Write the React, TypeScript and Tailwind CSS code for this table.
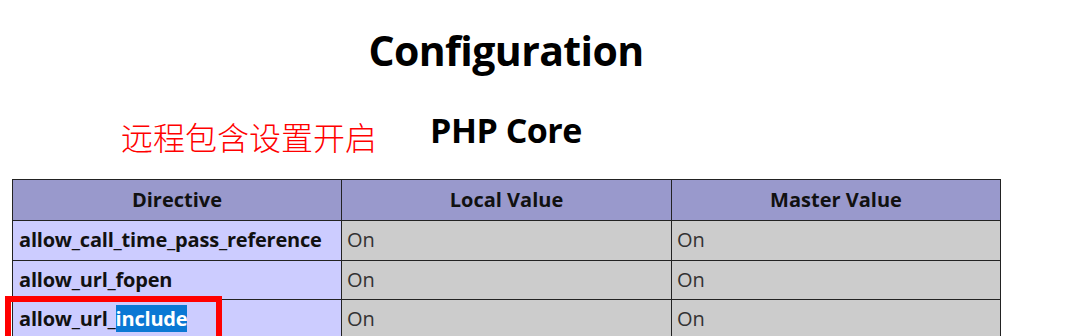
export default function App() {
  const rows = [
    { name: 'allow_call_time_pass_reference', local: 'On', master: 'On' },
    { name: 'allow_url_fopen', local: 'On', master: 'On' },
    { name: 'allow_url_include', local: 'On', master: 'On', marked: true },
  ]

  return (
    <div className="w-[1066px] h-[336px] overflow-hidden bg-white font-['Open_Sans','DejaVu_Sans',sans-serif] text-black">
      <div className="w-[1012px] text-center">
        <h1 className="pt-[24px] text-[41px] leading-[52px] font-bold tracking-[-0.6px]">Configuration</h1>

        {/* section title with the red annotation beside it */}
        <div className="relative mt-[32px] h-[44px]">
          <span className="absolute left-[121px] top-[10px] text-[32px] leading-[36px] font-light text-[#ff0000] font-['Noto_Sans_CJK_SC',sans-serif]">
            远程包含设置开启
          </span>
          <h2 className="text-[34px] leading-[44px] font-bold tracking-[-0.5px]">PHP Core</h2>
        </div>

        <div className="relative mt-[27px] ml-[12px] w-[989px]">
          <table className="w-full border-collapse text-left">
            <thead>
              <tr className="h-[41px] bg-[#9999cc]">
                <th className="w-[329px] border border-[#222] text-center text-[20px] font-bold text-[#111]">Directive</th>
                <th className="w-[330px] border border-[#222] text-center text-[20px] font-bold text-[#111]">Local Value</th>
                <th className="border border-[#222] text-center text-[20px] font-bold text-[#111]">Master Value</th>
              </tr>
            </thead>
            <tbody>
              {rows.map((r) => (
                <tr key={r.name} className="h-[39.5px]">
                  <td className="border border-[#222] bg-[#ccccff] px-[6px] text-[20px] font-bold whitespace-nowrap text-[#111] tracking-[-0.2px]">
                    {r.marked ? (
                      <>
                        allow_url_<span className="bg-[#0a78d4] text-white">include</span>
                      </>
                    ) : (
                      r.name
                    )}
                  </td>
                  <td className="border border-[#222] bg-[#cccccc] px-[5px] text-[20px] text-[#333]">{r.local}</td>
                  <td className="border border-[#222] bg-[#cccccc] px-[5px] text-[20px] text-[#333]">{r.master}</td>
                </tr>
              ))}
            </tbody>
          </table>
          <div className="absolute left-[-7px] top-[117px] h-[48px] w-[217px] border-[6px] border-[#ff0000]" />
        </div>
      </div>
    </div>
  )
}
